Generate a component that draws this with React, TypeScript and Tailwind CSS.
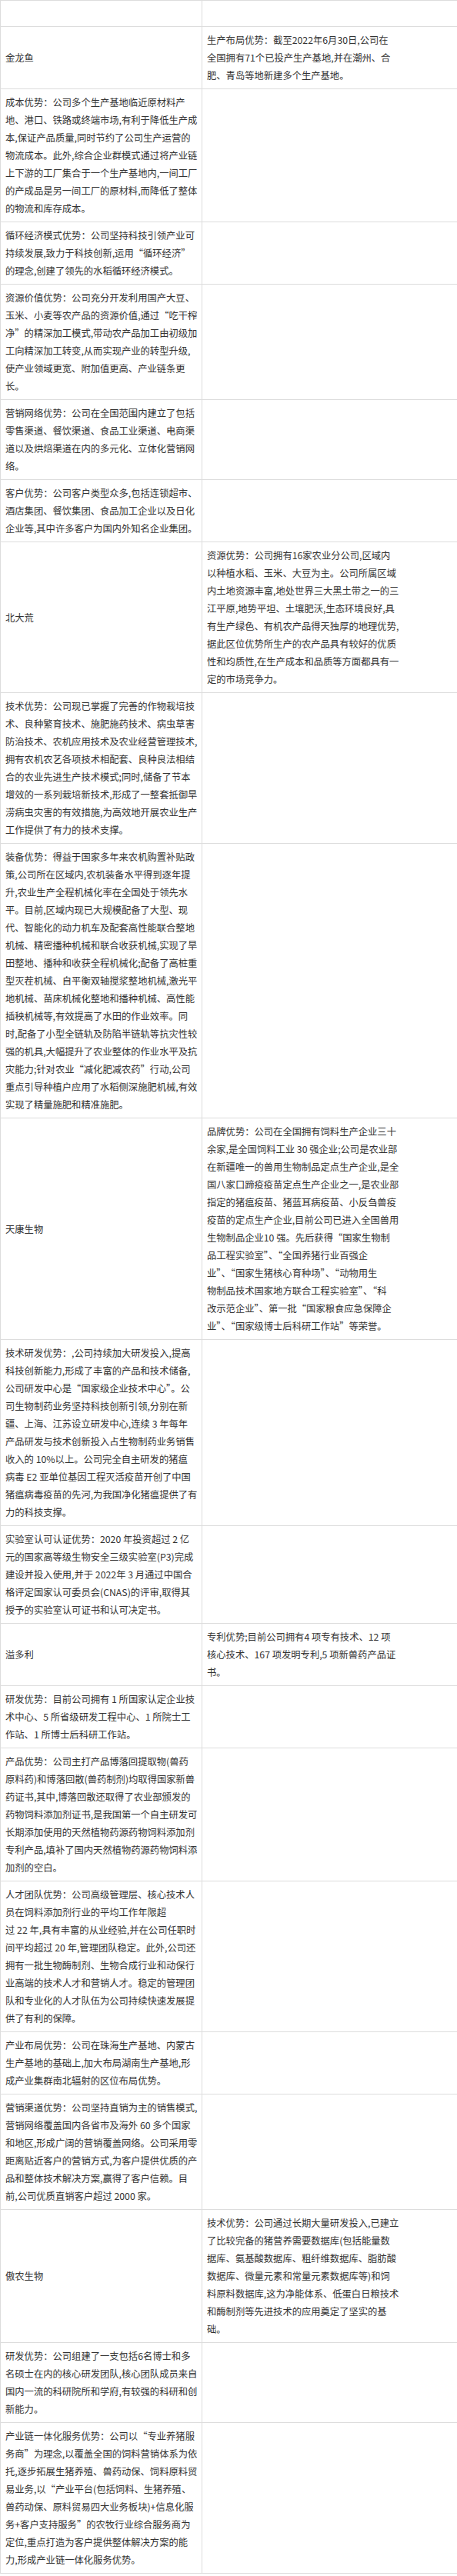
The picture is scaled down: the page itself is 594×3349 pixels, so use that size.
import React from "react";

type Row =
  | { kind: "empty" }
  | { kind: "company"; name: string; lines: string[] }
  | { kind: "adv"; lines: string[] };

const rows: Row[] = [
  { kind: "empty" },
  {
    kind: "company",
    name: "金龙鱼",
    lines: [
      "生产布局优势：截至2022年6月30日,公司在",
      "全国拥有71个已投产生产基地,并在潮州、合",
      "肥、青岛等地新建多个生产基地。",
    ],
  },
  {
    kind: "adv",
    lines: [
      "成本优势：公司多个生产基地临近原材料产",
      "地、港口、铁路或终端市场,有利于降低生产成",
      "本,保证产品质量,同时节约了公司生产运营的",
      "物流成本。此外,综合企业群模式通过将产业链",
      "上下游的工厂集合于一个生产基地内,一间工厂",
      "的产成品是另一间工厂的原材料,而降低了整体",
      "的物流和库存成本。",
    ],
  },
  {
    kind: "adv",
    lines: [
      "循环经济模式优势：公司坚持科技引领产业可",
      "持续发展,致力于科技创新,运用“循环经济”",
      "的理念,创建了领先的水稻循环经济模式。",
    ],
  },
  {
    kind: "adv",
    lines: [
      "资源价值优势：公司充分开发利用国产大豆、",
      "玉米、小麦等农产品的资源价值,通过“吃干榨",
      "净”的精深加工模式,带动农产品加工由初级加",
      "工向精深加工转变,从而实现产业的转型升级,",
      "使产业领域更宽、附加值更高、产业链条更",
      "长。",
    ],
  },
  {
    kind: "adv",
    lines: [
      "营销网络优势：公司在全国范围内建立了包括",
      "零售渠道、餐饮渠道、食品工业渠道、电商渠",
      "道以及烘焙渠道在内的多元化、立体化营销网",
      "络。",
    ],
  },
  {
    kind: "adv",
    lines: [
      "客户优势：公司客户类型众多,包括连锁超市、",
      "酒店集团、餐饮集团、食品加工企业以及日化",
      "企业等,其中许多客户为国内外知名企业集团。",
    ],
  },
  {
    kind: "company",
    name: "北大荒",
    lines: [
      "资源优势：公司拥有16家农业分公司,区域内",
      "以种植水稻、玉米、大豆为主。公司所属区域",
      "内土地资源丰富,地处世界三大黑土带之一的三",
      "江平原,地势平坦、土壤肥沃,生态环境良好,具",
      "有生产绿色、有机农产品得天独厚的地理优势,",
      "据此区位优势所生产的农产品具有较好的优质",
      "性和均质性,在生产成本和品质等方面都具有一",
      "定的市场竞争力。",
    ],
  },
  {
    kind: "adv",
    lines: [
      "技术优势：公司现已掌握了完善的作物栽培技",
      "术、良种繁育技术、施肥施药技术、病虫草害",
      "防治技术、农机应用技术及农业经营管理技术,",
      "拥有农机农艺各项技术相配套、良种良法相结",
      "合的农业先进生产技术模式;同时,储备了节本",
      "增效的一系列栽培新技术,形成了一整套抵御旱",
      "涝病虫灾害的有效措施,为高效地开展农业生产",
      "工作提供了有力的技术支撑。",
    ],
  },
  {
    kind: "adv",
    lines: [
      "装备优势：得益于国家多年来农机购置补贴政",
      "策,公司所在区域内,农机装备水平得到逐年提",
      "升,农业生产全程机械化率在全国处于领先水",
      "平。目前,区域内现已大规模配备了大型、现",
      "代、智能化的动力机车及配套高性能联合整地",
      "机械、精密播种机械和联合收获机械,实现了旱",
      "田整地、播种和收获全程机械化;配备了高桩重",
      "型灭茬机械、自平衡双轴搅浆整地机械,激光平",
      "地机械、苗床机械化整地和播种机械、高性能",
      "插秧机械等,有效提高了水田的作业效率。同",
      "时,配备了小型全链轨及防陷半链轨等抗灾性较",
      "强的机具,大幅提升了农业整体的作业水平及抗",
      "灾能力;针对农业“减化肥减农药”行动,公司",
      "重点引导种植户应用了水稻侧深施肥机械,有效",
      "实现了精量施肥和精准施肥。",
    ],
  },
  {
    kind: "company",
    name: "天康生物",
    lines: [
      "品牌优势：公司在全国拥有饲料生产企业三十",
      "余家,是全国饲料工业 30 强企业;公司是农业部",
      "在新疆唯一的兽用生物制品定点生产企业,是全",
      "国八家口蹄疫疫苗定点生产企业之一,是农业部",
      "指定的猪瘟疫苗、猪蓝耳病疫苗、小反刍兽疫",
      "疫苗的定点生产企业,目前公司已进入全国兽用",
      "生物制品企业10 强。先后获得“国家生物制",
      "品工程实验室”、“全国养猪行业百强企",
      "业”、“国家生猪核心育种场”、“动物用生",
      "物制品技术国家地方联合工程实验室”、“科",
      "改示范企业”、第一批“国家粮食应急保障企",
      "业”、“国家级博士后科研工作站”等荣誉。",
    ],
  },
  {
    kind: "adv",
    lines: [
      "技术研发优势：,公司持续加大研发投入,提高",
      "科技创新能力,形成了丰富的产品和技术储备,",
      "公司研发中心是“国家级企业技术中心”。公",
      "司生物制药业务坚持科技创新引领,分别在新",
      "疆、上海、江苏设立研发中心,连续 3 年每年",
      "产品研发与技术创新投入占生物制药业务销售",
      "收入的 10%以上。公司完全自主研发的猪瘟",
      "病毒 E2 亚单位基因工程灭活疫苗开创了中国",
      "猪瘟病毒疫苗的先河,为我国净化猪瘟提供了有",
      "力的科技支撑。",
    ],
  },
  {
    kind: "adv",
    lines: [
      "实验室认可认证优势：2020 年投资超过 2 亿",
      "元的国家高等级生物安全三级实验室(P3)完成",
      "建设并投入使用,并于 2022年 3 月通过中国合",
      "格评定国家认可委员会(CNAS)的评审,取得其",
      "授予的实验室认可证书和认可决定书。",
    ],
  },
  {
    kind: "company",
    name: "溢多利",
    lines: [
      "专利优势;目前公司拥有4 项专有技术、12 项",
      "核心技术、167 项发明专利,5 项新兽药产品证",
      "书。",
    ],
  },
  {
    kind: "adv",
    lines: [
      "研发优势：目前公司拥有 1 所国家认定企业技",
      "术中心、5 所省级研发工程中心、1 所院士工",
      "作站、1 所博士后科研工作站。",
    ],
  },
  {
    kind: "adv",
    lines: [
      "产品优势：公司主打产品博落回提取物(兽药",
      "原料药)和博落回散(兽药制剂)均取得国家新兽",
      "药证书,其中,博落回散还取得了农业部颁发的",
      "药物饲料添加剂证书,是我国第一个自主研发可",
      "长期添加使用的天然植物药源药物饲料添加剂",
      "专利产品,填补了国内天然植物药源药物饲料添",
      "加剂的空白。",
    ],
  },
  {
    kind: "adv",
    lines: [
      "人才团队优势：公司高级管理层、核心技术人",
      "员在饲料添加剂行业的平均工作年限超",
      "过 22 年,具有丰富的从业经验,并在公司任职时",
      "间平均超过 20 年,管理团队稳定。此外,公司还",
      "拥有一批生物酶制剂、生物合成行业和动保行",
      "业高端的技术人才和营销人才。稳定的管理团",
      "队和专业化的人才队伍为公司持续快速发展提",
      "供了有利的保障。",
    ],
  },
  {
    kind: "adv",
    lines: [
      "产业布局优势：公司在珠海生产基地、内蒙古",
      "生产基地的基础上,加大布局湖南生产基地,形",
      "成产业集群南北辐射的区位布局优势。",
    ],
  },
  {
    kind: "adv",
    lines: [
      "营销渠道优势：公司坚持直销为主的销售模式,",
      "营销网络覆盖国内各省市及海外 60 多个国家",
      "和地区,形成广阔的营销覆盖网络。公司采用零",
      "距离贴近客户的营销方式,为客户提供优质的产",
      "品和整体技术解决方案,赢得了客户信赖。目",
      "前,公司优质直销客户超过 2000 家。",
    ],
  },
  {
    kind: "company",
    name: "傲农生物",
    lines: [
      "技术优势：公司通过长期大量研发投入,已建立",
      "了比较完备的猪营养需要数据库(包括能量数",
      "据库、氨基酸数据库、粗纤维数据库、脂肪酸",
      "数据库、微量元素和常量元素数据库等)和饲",
      "料原料数据库,这为净能体系、低蛋白日粮技术",
      "和酶制剂等先进技术的应用奠定了坚实的基",
      "础。",
    ],
  },
  {
    kind: "adv",
    lines: [
      "研发优势：公司组建了一支包括6名博士和多",
      "名硕士在内的核心研发团队,核心团队成员来自",
      "国内一流的科研院所和学府,有较强的科研和创",
      "新能力。",
    ],
  },
  {
    kind: "adv",
    lines: [
      "产业链一体化服务优势：公司以“专业养猪服",
      "务商”为理念,以覆盖全国的饲料营销体系为依",
      "托,逐步拓展生猪养殖、兽药动保、饲料原料贸",
      "易业务,以“产业平台(包括饲料、生猪养殖、",
      "兽药动保、原料贸易四大业务板块)+信息化服",
      "务+客户支持服务”的农牧行业综合服务商为",
      "定位,重点打造为客户提供整体解决方案的能",
      "力,形成产业链一体化服务优势。",
    ],
  },
];

function Lines({ lines }: { lines: string[] }) {
  return (
    <div className="whitespace-nowrap">
      {lines.map((l, i) => (
        <div key={i}>{l}</div>
      ))}
    </div>
  );
}

const cell =
  "border border-[#dddddd] pl-[6px] pr-[5px] pt-[6px] pb-[5px] align-middle";

export default function App() {
  return (
    <div
      className="w-[594px] overflow-hidden bg-white text-[#333333] text-[12.3px] leading-[23px]"
      style={{ fontFamily: '"Noto Sans CJK SC", "Noto Sans", sans-serif' }}
    >
      <table className="w-[595px] table-fixed border-collapse">
        <colgroup>
          <col className="w-[262px]" />
          <col className="w-[333px]" />
        </colgroup>
        <tbody>
          {rows.map((r, i) => {
            if (r.kind === "empty") {
              return (
                <tr key={i}>
                  <td className={cell}>
                    <div className="h-[22px]" />
                  </td>
                  <td className={cell}>
                    <div className="h-[22px]" />
                  </td>
                </tr>
              );
            }
            if (r.kind === "company") {
              return (
                <tr key={i}>
                  <td className={cell}>{r.name}</td>
                  <td className={cell}>
                    <Lines lines={r.lines} />
                  </td>
                </tr>
              );
            }
            return (
              <tr key={i}>
                <td className={cell}>
                  <Lines lines={r.lines} />
                </td>
                <td className={cell} />
              </tr>
            );
          })}
        </tbody>
      </table>
    </div>
  );
}
